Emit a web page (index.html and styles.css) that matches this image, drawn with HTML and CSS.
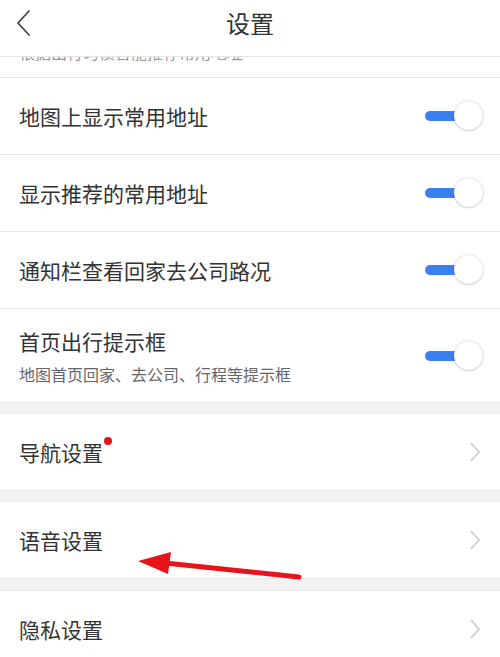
FILE: index.html
```html
<!DOCTYPE html>
<html lang="zh">
<head>
<meta charset="utf-8">
<link rel="stylesheet" href="styles.css">
</head>
<body>
<div class="page">
  <header class="topbar">
    <svg class="back" width="20" height="30" viewBox="0 0 20 30"><path d="M15 3 L4 15 L15 27" fill="none" stroke="#444" stroke-width="1.8" stroke-linecap="round" stroke-linejoin="round"/></svg>
    <h1 class="title">设置</h1>
  </header>
  <div class="sliver"><span class="sliver-text">根据出行习惯智能推荐常用地址</span></div>

  <div class="row">
    <span class="label">地图上显示常用地址</span>
    <span class="toggle"><span class="track"></span><span class="knob"></span></span>
  </div>
  <div class="row">
    <span class="label">显示推荐的常用地址</span>
    <span class="toggle"><span class="track"></span><span class="knob"></span></span>
  </div>
  <div class="row">
    <span class="label">通知栏查看回家去公司路况</span>
    <span class="toggle"><span class="track"></span><span class="knob"></span></span>
  </div>
  <div class="row row-tall">
    <div class="texts">
      <span class="label">首页出行提示框</span>
      <span class="sub">地图首页回家、去公司、行程等提示框</span>
    </div>
    <span class="toggle"><span class="track"></span><span class="knob"></span></span>
  </div>

  <div class="gap"></div>
  <div class="row link">
    <span class="label">导航设置<span class="dot"></span></span>
    <svg class="chev" width="12" height="22" viewBox="0 0 12 22"><path d="M2 2 L10 11 L2 20" fill="none" stroke="#c8c8c8" stroke-width="1.5"/></svg>
  </div>
  <div class="gap"></div>
  <div class="row link">
    <span class="label">语音设置</span>
    <svg class="chev" width="12" height="22" viewBox="0 0 12 22"><path d="M2 2 L10 11 L2 20" fill="none" stroke="#c8c8c8" stroke-width="1.5"/></svg>
  </div>
  <div class="gap gap-last"></div>
  <div class="row link">
    <span class="label">隐私设置</span>
    <svg class="chev" width="12" height="22" viewBox="0 0 12 22"><path d="M2 2 L10 11 L2 20" fill="none" stroke="#c8c8c8" stroke-width="1.5"/></svg>
  </div>

  <svg class="arrow" width="500" height="657" viewBox="0 0 500 657">
    <line x1="299" y1="577" x2="165" y2="563" stroke="#e8141b" stroke-width="5" stroke-linecap="round"/>
    <polygon points="138,561 171,552 168,574" fill="#e8141b"/>
  </svg>
</div>
</body>
</html>
```
FILE: styles.css
```css
html, body {
  margin: 0;
  padding: 0;
  background: #fff;
}
.page {
  position: relative;
  width: 500px;
  height: 657px;
  overflow: hidden;
  font-family: "Noto Sans CJK SC", "Noto Sans", sans-serif;
  color: #333;
}
.topbar {
  height: 56px;
  border-bottom: 1px solid #e6e6e6;
  display: flex;
  align-items: center;
  justify-content: center;
  position: relative;
  background: #fff;
}
.back {
  position: absolute;
  left: 14px;
  top: 8px;
}
.title {
  margin: 0;
  font-size: 24px;
  font-weight: 400;
  color: #333;
  line-height: 1;
  margin-top: -10px;
}
.sliver {
  height: 20px;
  overflow: hidden;
  padding-left: 19px;
  border-bottom: 1px solid #e8e8e8;
}
.sliver-text {
  display: block;
  font-size: 16px;
  line-height: 20px;
  color: #999;
  margin-top: -15px;
}
.row {
  height: 76px;
  border-bottom: 1px solid #e8e8e8;
  display: flex;
  align-items: center;
  justify-content: space-between;
  padding: 0 17px 0 19px;
  background: #fff;
}
.row-tall {
  height: 93px;
  border-bottom: none;
}
.label {
  font-size: 21px;
  line-height: 1;
  color: #333;
  position: relative;
}
.texts {
  display: flex;
  flex-direction: column;
  gap: 14px;
  margin-top: 2px;
}
.sub {
  font-size: 16px;
  line-height: 1;
  color: #666;
}
.toggle {
  position: relative;
  width: 58px;
  height: 30px;
  display: block;
}
.track {
  position: absolute;
  left: 0;
  top: 10px;
  width: 34px;
  height: 10px;
  border-radius: 5px;
  background: #3b80f1;
}
.knob {
  position: absolute;
  right: 0;
  top: 0;
  width: 29px;
  height: 29px;
  border-radius: 50%;
  background: #fff;
  box-shadow: 0 0 2px rgba(0,0,0,0.25), 0 1px 2px rgba(0,0,0,0.12);
}
.gap {
  height: 10px;
  background: #f2f2f2;
  border-top: 1px solid #e6e6e6;
  border-bottom: 1px solid #e9e9e9;
}
.gap-last {
  height: 11px;
}
.link {
  height: 76px;
  border-bottom: none;
}
.chev {
  margin-right: 2px;
}
.dot {
  position: absolute;
  right: -9px;
  top: -5px;
  width: 8px;
  height: 8px;
  border-radius: 50%;
  background: #e8141b;
}
.arrow {
  position: absolute;
  left: 0;
  top: 0;
  pointer-events: none;
}
```
